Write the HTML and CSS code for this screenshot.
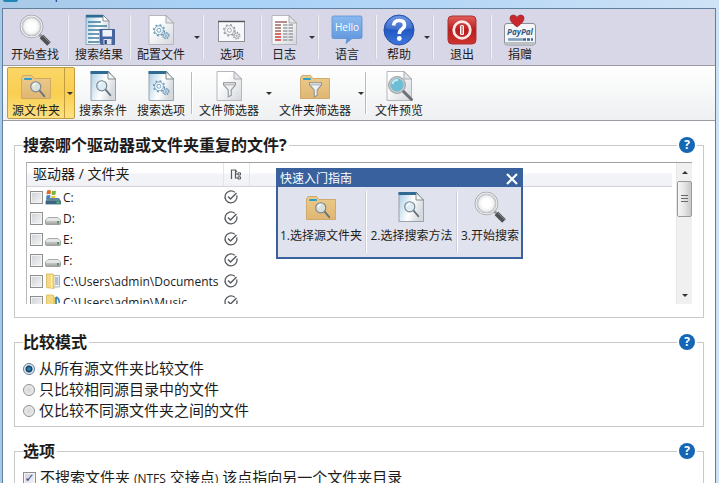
FILE: index.html
```html
<!DOCTYPE html>
<html lang="zh-CN">
<head>
    <meta charset="UTF-8">
    <meta name="viewport" content="width=device-width, initial-scale=1.0">
    <title>AllDup</title>
    <link rel="stylesheet" href="styles.css">
</head>
<body>
    <!-- 图标定义 -->
    <svg class="sprite" aria-hidden="true">
        <defs>
            <linearGradient id="g-page" x1="0" y1="0" x2="1" y2="1">
                <stop offset="0.3" stop-color="#ffffff"/>
                <stop offset="1" stop-color="#d3d7dc"/>
            </linearGradient>
            <linearGradient id="g-page-blue" x1="0" y1="0" x2="1" y2="0.4">
                <stop offset="0" stop-color="#a9cde4"/>
                <stop offset="0.6" stop-color="#ffffff"/>
                <stop offset="1" stop-color="#d5dade"/>
            </linearGradient>
            <linearGradient id="g-folder" x1="0" y1="0" x2="0" y2="1">
                <stop offset="0" stop-color="#eccb8b"/>
                <stop offset="1" stop-color="#dfb672"/>
            </linearGradient>
            <linearGradient id="g-bubble" x1="0" y1="0" x2="0" y2="1">
                <stop offset="0" stop-color="#8ab9ee"/>
                <stop offset="1" stop-color="#5b93dc"/>
            </linearGradient>
            <linearGradient id="g-help" x1="0" y1="0" x2="0" y2="1">
                <stop offset="0" stop-color="#5b8ae0"/>
                <stop offset="0.5" stop-color="#2358c4"/>
                <stop offset="1" stop-color="#3d78dc"/>
            </linearGradient>
            <linearGradient id="g-exit" x1="0" y1="0" x2="0" y2="1">
                <stop offset="0" stop-color="#e0605c"/>
                <stop offset="0.5" stop-color="#b81d1d"/>
                <stop offset="1" stop-color="#cf3430"/>
            </linearGradient>
            <linearGradient id="g-drive" x1="0" y1="0" x2="0" y2="1">
                <stop offset="0" stop-color="#f2f2f2"/>
                <stop offset="1" stop-color="#9da09f"/>
            </linearGradient>
            <radialGradient id="g-lens">
                <stop offset="0.4" stop-color="#ffffff"/>
                <stop offset="1" stop-color="#dfe1e4"/>
            </radialGradient>
        </defs>

        <symbol id="i-page" viewBox="0 0 32 32">
            <path d="M4 1.5H21L28.5 9V30.5H4Z" fill="url(#g-page)" stroke="#b4b7bc"/>
            <path d="M21 1.5V9H28.5Z" fill="#e4e6e9" stroke="#9a9da2" stroke-width="0.8"/>
        </symbol>
        <symbol id="i-page-blue" viewBox="0 0 32 32">
            <path d="M4 1.5H21L28.5 9V30.5H4Z" fill="url(#g-page-blue)" stroke="#8f9ba5" stroke-width="0.9"/>
            <path d="M3.5 1H21.5L24 4H3.5Z" fill="#2e6a92"/>
            <path d="M21 1.5V9H28.5Z" fill="#f3f5f6" stroke="#6d757c" stroke-width="0.8"/>
        </symbol>
        <symbol id="i-lens" viewBox="0 0 20 20">
            <path d="M11.5 11.5L17 18" stroke="#65717b" stroke-width="2" stroke-linecap="round"/>
            <circle cx="7.5" cy="7.5" r="5.6" fill="#d6e9f3" fill-opacity="0.8" stroke="#7b8790" stroke-width="1.3"/>
            <path d="M4.5 7A3.5 3.5 0 0 1 8 4" fill="none" stroke="#fff" stroke-width="1.2"/>
        </symbol>
        <symbol id="i-funnel" viewBox="0 0 20 20">
            <path d="M3 2H17V4.5L12 10.5V17L8.5 18.5V10.500L3 4.500Z" fill="#eff1f2" stroke="#8a8f93" stroke-width="1.2"/>
            <path d="M4 4.500H16" stroke="#9da1a5"/>
        </symbol>
        <symbol id="i-gears" viewBox="0 0 22 20">
            <g fill="none" stroke="currentColor">
                <circle cx="8.5" cy="8.5" r="6.6" stroke-width="1.8" stroke-dasharray="2.3 2.88"/>
                <circle cx="8.5" cy="8.5" r="5.4"/>
                <circle cx="8.5" cy="8.5" r="2.4"/>
                <circle cx="17" cy="15" r="3.9" stroke-width="1.4" stroke-dasharray="1.5 1.56"/>
                <circle cx="17" cy="15" r="3"/>
                <circle cx="17" cy="15" r="1"/>
            </g>
        </symbol>
        <symbol id="i-folder" viewBox="0 0 32 32">
            <path d="M1.5 8L3 5.5H11.5L14 8.5H30.5V28.5H1.5Z" fill="url(#g-folder)" stroke="#cba566" stroke-width="0.9"/>
            <rect x="4" y="8" width="8" height="2" rx="0.8" fill="#2f9fc4"/>
        </symbol>

        <symbol id="i-find" viewBox="0 0 32 32">
            <path d="M20 20L23.5 23.5" stroke="#999" stroke-width="3"/>
            <path d="M22.5 22.5L30 30" stroke="#505154" stroke-width="5.2"/>
            <path d="M24 22L31 29" stroke="#85868a" stroke-width="1"/>
            <circle cx="12.5" cy="12.5" r="10.6" fill="url(#g-lens)" stroke="#a3a4a8" stroke-width="2.4"/>
            <circle cx="12.5" cy="12.5" r="10.4" fill="none" stroke="#ededf0" stroke-width="1.2"/>
            <circle cx="12.5" cy="12.5" r="8.8" fill="none" stroke="#bbbdc1" stroke-width="0.8"/>
        </symbol>
        <symbol id="i-results" viewBox="0 0 32 32">
            <path d="M3 1H20L26 7V30.5H3Z" fill="url(#g-page-blue)" stroke="#7c97a8" stroke-width="0.8"/>
            <path d="M3 1H20L22 3.5H3Z" fill="#2e6a92"/>
            <path d="M20 1V7H26Z" fill="#fff" stroke="#6d757c" stroke-width="0.8"/>
            <path d="M5 8H18M5 12H24M5 16H22M5 20H16M5 24H16M5 28H16" stroke="#3f7d9f" stroke-width="1.3"/>
            <path d="M17 15.5H31.5V30.5H18.5L17 29Z" fill="#4667a3" stroke="#34508a" stroke-width="0.8"/>
            <rect x="19.5" y="16" width="9.5" height="6.5" fill="#eef3f9"/>
            <rect x="20.5" y="25" width="8" height="5.5" fill="#dde3ec"/>
            <rect x="21.5" y="26" width="2.3" height="4" fill="#2d4679"/>
        </symbol>
        <symbol id="i-profile" viewBox="0 0 32 32">
            <use href="#i-page" width="32" height="32"/>
            <use href="#i-gears" x="7" y="9" width="18" height="17" color="#6798b8"/>
        </symbol>
        <symbol id="i-options" viewBox="0 0 32 32">
            <rect x="2.5" y="7.5" width="26" height="20" fill="#f8f8fa" stroke="#8d9095"/>
            <path d="M2 7.5H29" stroke="#505358" stroke-width="1.4"/>
            <use href="#i-gears" x="6" y="9" width="19" height="17" color="#9a9da2"/>
        </symbol>
        <symbol id="i-log" viewBox="0 0 32 32">
            <use href="#i-page" width="32" height="32"/>
            <path d="M7 8H19M7 11H13M7 14H13M7 17H13" stroke="#9d6a66" stroke-width="1.4"/>
            <path d="M7 20H13M7 23H13M7 26H13" stroke="#d23a31" stroke-width="1.6"/>
            <path d="M15 11H25M15 14H25M15 17H25M15 20H25M15 23H25M15 26H25" stroke="#9b9da1" stroke-width="1.3" stroke-dasharray="4.5 1"/>
        </symbol>
        <symbol id="i-help" viewBox="0 0 32 32">
            <circle cx="16" cy="16" r="15" fill="url(#g-help)" stroke="#284fa5"/>
            <path d="M3 14A13 12 0 0 1 29 14Q16 18 3 14Z" fill="#fff" fill-opacity="0.12"/>
            <path d="M10.5 11.5Q11 6.5 16.2 6.5Q21.5 6.5 21.5 11Q21.5 13.5 18.8 15.3Q16.3 17 16.3 20" fill="none" stroke="#fff" stroke-width="3.6"/>
            <circle cx="16.3" cy="24.5" r="2.4" fill="#fff"/>
        </symbol>
        <symbol id="i-exit" viewBox="0 0 32 32">
            <rect x="2" y="2" width="28" height="28" rx="4" fill="url(#g-exit)" stroke="#a33"/>
            <circle cx="16" cy="16" r="8.3" fill="none" stroke="#f7e9e7" stroke-width="2.8"/>
            <rect x="14" y="11" width="4" height="10" rx="1.5" fill="#fff"/>
            <path d="M16 12V20" stroke="#b81d1d"/>
        </symbol>
        <symbol id="i-source" viewBox="0 0 32 32">
            <use href="#i-folder" width="32" height="32"/>
            <use href="#i-lens" x="9" y="10" width="18" height="18"/>
        </symbol>
        <symbol id="i-criteria" viewBox="0 0 32 32">
            <use href="#i-page-blue" width="32" height="32"/>
            <use href="#i-lens" x="8" y="9" width="18" height="18"/>
        </symbol>
        <symbol id="i-search-options" viewBox="0 0 32 32">
            <use href="#i-page-blue" width="32" height="32"/>
            <use href="#i-gears" x="7" y="9" width="18" height="17" color="#6798b8"/>
        </symbol>
        <symbol id="i-file-filter" viewBox="0 0 32 32">
            <use href="#i-page" width="32" height="32"/>
            <use href="#i-funnel" x="8" y="11" width="17" height="17"/>
        </symbol>
        <symbol id="i-folder-filter" viewBox="0 0 32 32">
            <use href="#i-folder" width="32" height="32"/>
            <use href="#i-funnel" x="8" y="11" width="17" height="17"/>
        </symbol>
        <symbol id="i-preview" viewBox="0 0 32 32">
            <use href="#i-page" width="32" height="32"/>
            <path d="M20 21L28.5 29.5" stroke="#6c7074" stroke-width="3" stroke-linecap="round"/>
            <circle cx="14" cy="15" r="7.5" fill="#6dbdd5" stroke="#c3c8cb" stroke-width="2"/>
            <circle cx="14" cy="15" r="8.5" fill="none" stroke="#71777b" stroke-width="0.6"/>
            <path d="M9.5 14A5 5 0 0 1 15 10" fill="none" stroke="#c9edf7" stroke-width="2"/>
        </symbol>

        <symbol id="i-system" viewBox="0 0 16 16">
            <path d="M2 1.5Q4 0.5 6 1.5L5.5 5.5Q3.5 4.5 1.5 5.5Z" fill="#dc6a2c"/>
            <path d="M7 1.5Q9 2.5 11 1.5L10.5 5.5Q8.5 6.5 6.5 5.5Z" fill="#7db538"/>
            <path d="M1.5 6.5Q3.5 5.5 5.5 6.5L5 10.5H1Z" fill="#3e84c4"/>
            <path d="M6.5 6.5Q8.5 7.5 10.5 6.5L10 10.5H6Z" fill="#efc12e"/>
            <path d="M3 9H14L16 12V15.5H0.5V12Z" fill="#62879d"/>
            <path d="M1 12H15.5V15H1Z" fill="#3b6581"/>
            <rect x="11.5" y="12.5" width="3" height="2" fill="#53c65c"/>
        </symbol>
        <symbol id="i-drive" viewBox="0 0 16 16">
            <path d="M3 7.5H13L15.5 10V13.5Q15.5 14.500 14.5 14.500H1.5Q0.5 14.500 0.5 13.5V10Z" fill="url(#g-drive)" stroke="#85898a" stroke-width="0.7"/>
            <path d="M1 10H15" stroke="#fff" stroke-width="0.8"/>
            <rect x="12" y="11" width="2" height="2.3" fill="#4b9c4f"/>
        </symbol>
        <symbol id="i-documents" viewBox="0 0 16 16">
            <path d="M7 2.5H14.5V14H7Z" fill="#f1f5f9" stroke="#8fa3b5" stroke-width="0.8"/>
            <path d="M10 5H13.5M10 7H13.5M10 9H13.5M10 11H13.5" stroke="#5e88b3" stroke-width="0.9"/>
            <path d="M1.5 1H8L9 2V15.5L1.5 14.5Z" fill="#f3da82" stroke="#d3b04c" stroke-width="0.7"/>
            <path d="M6.5 2V15" stroke="#fff0ba"/>
        </symbol>
        <symbol id="i-music" viewBox="0 0 16 16">
            <path d="M1.5 1H8L9 2V15.5L1.5 14.5Z" fill="#f3da82" stroke="#d3b04c" stroke-width="0.7"/>
            <path d="M9 3H12V14H9Z" fill="#e6c867"/>
            <path d="M11 3V12M11 3Q15 5 14 9" fill="none" stroke="#2d84bf" stroke-width="1.5"/>
            <circle cx="9.5" cy="12.5" r="2" fill="#2d84bf"/>
        </symbol>
        <symbol id="i-ok" viewBox="0 0 16 16">
            <path d="M13.8 6.3A6 6 0 1 1 11.8 3.2" fill="none" stroke="#5a5d60" stroke-width="1.3"/>
            <path d="M5 7.5L7.5 10L13.5 4" fill="none" stroke="#5a5d60" stroke-width="1.5"/>
        </symbol>
        <symbol id="i-tree" viewBox="0 0 12 12">
            <path d="M1.5 11V2H5.5V10H8M5.5 6H8M5.5 2L7 4" fill="none" stroke="#55585c" stroke-width="1.2"/>
            <path d="M8 4.8H10.5V7H8ZM8 8.8H10.5V11H8Z" fill="none" stroke="#55585c"/>
        </symbol>
    </svg>

    <div class="window">
        <div class="titlebar">
            <span class="app-icon"></span>
            <span class="app-title">AllDup</span>
        </div>

        <div class="client">
            <!-- 主工具栏 -->
            <nav class="toolbar toolbar-main" aria-label="主工具栏">
                <button type="button" class="tool w64"><svg class="icon"><use href="#i-find"/></svg>开始查找</button>
                <span class="sep"></span>
                <button type="button" class="tool w60"><svg class="icon"><use href="#i-results"/></svg>搜索结果</button>
                <span class="sep"></span>
                <button type="button" class="tool w60"><svg class="icon"><use href="#i-profile"/></svg>配置文件</button>
                <button type="button" class="arrow" aria-label="配置文件菜单"></button>
                <span class="sep"></span>
                <button type="button" class="tool w56"><svg class="icon"><use href="#i-options"/></svg>选项</button>
                <span class="sep"></span>
                <button type="button" class="tool w44"><svg class="icon"><use href="#i-log"/></svg>日志</button>
                <button type="button" class="arrow" aria-label="日志菜单"></button>
                <span class="sep"></span>
                <button type="button" class="tool w56">
                    <svg class="icon" viewBox="0 0 32 32">
                        <path d="M2.5 2H29.5Q31 2 31 3.5V23Q31 24.5 29.5 24.5H21L15 29.5L16 24.5H2.5Q1 24.5 1 23V3.5Q1 2 2.5 2Z" fill="url(#g-bubble)" stroke="#5c8fd3" stroke-width="0.8"/>
                        <text x="16" y="17" class="bubble-text">Hello</text>
                    </svg>语言
                </button>
                <span class="sep"></span>
                <button type="button" class="tool w44"><svg class="icon"><use href="#i-help"/></svg>帮助</button>
                <button type="button" class="arrow" aria-label="帮助菜单"></button>
                <span class="sep"></span>
                <button type="button" class="tool w56"><svg class="icon"><use href="#i-exit"/></svg>退出</button>
                <span class="sep"></span>
                <button type="button" class="tool w56">
                    <svg class="icon" viewBox="0 0 32 32">
                        <rect x="0.5" y="9.5" width="31" height="21.5" rx="2.5" fill="#f4f5f6" stroke="#8b8f94"/>
                        <path d="M1 28H31V29Q31 31 29 31H3Q1 31 1 29Z" fill="#bcc0c5"/>
                        <path d="M4 25.5H18" stroke="#7da0bb" stroke-width="2.6"/>
                        <path d="M18.5 25.5H22M23 25.5H26M27 25.5H29" stroke="#3d6a8f" stroke-width="2.6"/>
                        <text x="16" y="21" class="paypal-text">PayPal</text>
                        <path d="M13 13Q6 8 6 4.5Q6 1 9.300 1Q12 1 13 3.500Q14 1 16.700 1Q20 1 20 4.500Q20 8 13 13Z" fill="#c9282d" stroke="#8e2226" stroke-width="0.7"/>
                    </svg>捐赠
                </button>
            </nav>

            <!-- 页面工具栏 -->
            <nav class="toolbar toolbar-pages" aria-label="页面工具栏">
                <div class="split-active">
                    <button type="button" class="tool w56"><svg class="icon"><use href="#i-source"/></svg>源文件夹</button>
                    <button type="button" class="arrow" aria-label="源文件夹菜单"></button>
                </div>
                <button type="button" class="tool w56"><svg class="icon"><use href="#i-criteria"/></svg>搜索条件</button>
                <button type="button" class="tool w60"><svg class="icon"><use href="#i-search-options"/></svg>搜索选项</button>
                <span class="sep"></span>
                <button type="button" class="tool w72"><svg class="icon"><use href="#i-file-filter"/></svg>文件筛选器</button>
                <button type="button" class="arrow" aria-label="文件筛选器菜单"></button>
                <button type="button" class="tool w84"><svg class="icon"><use href="#i-folder-filter"/></svg>文件夹筛选器</button>
                <button type="button" class="arrow" aria-label="文件夹筛选器菜单"></button>
                <span class="sep"></span>
                <button type="button" class="tool w64"><svg class="icon"><use href="#i-preview"/></svg>文件预览</button>
            </nav>

            <main class="content">
                <fieldset class="group group-source">
                    <legend>搜索哪个驱动器或文件夹重复的文件?</legend>
                    <button type="button" class="help" aria-label="帮助">?</button>
                    <div class="list">
                        <div class="list-view">
                            <table class="folders">
                                <thead>
                                    <tr>
                                        <th class="col-name">驱动器 / 文件夹</th>
                                        <th class="col-sub"><svg class="icon-12"><use href="#i-tree"/></svg></th>
                                        <th></th>
                                    </tr>
                                </thead>
                                <tbody>
                                    <tr>
                                        <td><label class="path"><input type="checkbox" class="check"><svg class="icon-16"><use href="#i-system"/></svg>C:</label></td>
                                        <td class="col-sub"><svg class="icon-16"><use href="#i-ok"/></svg></td>
                                        <td></td>
                                    </tr>
                                    <tr>
                                        <td><label class="path"><input type="checkbox" class="check"><svg class="icon-16"><use href="#i-drive"/></svg>D:</label></td>
                                        <td class="col-sub"><svg class="icon-16"><use href="#i-ok"/></svg></td>
                                        <td></td>
                                    </tr>
                                    <tr>
                                        <td><label class="path"><input type="checkbox" class="check"><svg class="icon-16"><use href="#i-drive"/></svg>E:</label></td>
                                        <td class="col-sub"><svg class="icon-16"><use href="#i-ok"/></svg></td>
                                        <td></td>
                                    </tr>
                                    <tr>
                                        <td><label class="path"><input type="checkbox" class="check"><svg class="icon-16"><use href="#i-drive"/></svg>F:</label></td>
                                        <td class="col-sub"><svg class="icon-16"><use href="#i-ok"/></svg></td>
                                        <td></td>
                                    </tr>
                                    <tr>
                                        <td><label class="path"><input type="checkbox" class="check"><svg class="icon-16"><use href="#i-documents"/></svg>C:\Users\admin\Documents</label></td>
                                        <td class="col-sub"><svg class="icon-16"><use href="#i-ok"/></svg></td>
                                        <td></td>
                                    </tr>
                                    <tr>
                                        <td><label class="path"><input type="checkbox" class="check"><svg class="icon-16"><use href="#i-music"/></svg>C:\Users\admin\Music</label></td>
                                        <td class="col-sub"><svg class="icon-16"><use href="#i-ok"/></svg></td>
                                        <td></td>
                                    </tr>
                                </tbody>
                            </table>
                        </div>
                        <div class="scrollbar">
                            <button type="button" class="scroll-btn scroll-up" aria-label="向上"></button>
                            <div class="thumb"><span class="grip"></span></div>
                            <button type="button" class="scroll-btn scroll-down" aria-label="向下"></button>
                        </div>
                    </div>

                    <!-- 浮动的快速入门窗口 -->
                    <section class="guide">
                        <header class="guide-title">
                            <h2>快速入门指南</h2>
                            <button type="button" class="guide-close" aria-label="关闭">
                                <svg viewBox="0 0 12 12"><path d="M1 1L11 11M11 1L1 11" stroke="#fff" stroke-width="2.2"/></svg>
                            </button>
                        </header>
                        <div class="guide-steps">
                            <button type="button" class="tool"><svg class="icon"><use href="#i-source"/></svg>1.选择源文件夹</button>
                            <span class="sep"></span>
                            <button type="button" class="tool"><svg class="icon"><use href="#i-criteria"/></svg>2.选择搜索方法</button>
                            <span class="sep"></span>
                            <button type="button" class="tool"><svg class="icon"><use href="#i-find"/></svg>3.开始搜索</button>
                        </div>
                    </section>
                </fieldset>

                <fieldset class="group">
                    <legend>比较模式</legend>
                    <button type="button" class="help" aria-label="帮助">?</button>
                    <label class="option"><input type="radio" name="mode" class="radio" checked>从所有源文件夹比较文件</label>
                    <label class="option"><input type="radio" name="mode" class="radio">只比较相同源目录中的文件</label>
                    <label class="option"><input type="radio" name="mode" class="radio">仅比较不同源文件夹之间的文件</label>
                </fieldset>

                <fieldset class="group">
                    <legend>选项</legend>
                    <button type="button" class="help" aria-label="帮助">?</button>
                    <label class="option"><input type="checkbox" class="check" checked><span>不搜索文件夹 <small>(NTFS</small> 交接点<small>)</small> 该点指向另一个文件夹目录</span></label>
                </fieldset>
            </main>
        </div>
    </div>
</body>
</html>
```

FILE: styles.css
```css
:root {
    --frame: #5f7f9f;
    --toolbar: #d8d7e7;
    --line: #c9c9c9;
    --guide: #38619e;
    --help: #1566b4;
}

* {
    margin: 0;
    padding: 0;
    box-sizing: border-box;
}

body {
    font-family: 'Open Sans', 'Noto Sans CJK SC', sans-serif;
    font-size: 12px;
    color: #1c1c1c;
    background-color: #b9d6f3;
    overflow: hidden;
}

button {
    font: inherit;
    color: inherit;
    background: none;
    border: none;
}

.sprite {
    position: absolute;
    width: 0;
    height: 0;
}

/* 窗口 */
.window {
    display: flex;
    flex-direction: column;
    height: 100vh;
    padding: 0 3px 0 2px;
    background: linear-gradient(to right, #a9c9e6, #a8d2f8 30%, #b4d6f6 60%, #cfe3f6);
}

.titlebar {
    display: flex;
    align-items: flex-end;
    gap: 7px;
    height: 8px;
    padding: 0 1px 6px;
    overflow: hidden;
    flex-shrink: 0;
}

.app-icon {
    width: 15px;
    height: 16px;
    border-radius: 2px;
    background-color: #1f87b5;
    flex-shrink: 0;
}

.app-title {
    font-size: 12px;
    line-height: 14px;
}

.client {
    flex: 1;
    min-height: 0;
    display: flex;
    flex-direction: column;
    background-color: #fff;
    border: 1px solid var(--frame);
    border-bottom: none;
    overflow: hidden;
}

/* 工具栏 */
.toolbar {
    display: flex;
    flex-shrink: 0;
    border-bottom: 1px solid #9a9ba3;
}

.toolbar-main {
    height: 57px;
    background-color: var(--toolbar);
}

.toolbar-pages {
    height: 55px;
    padding-left: 4px;
    background: linear-gradient(to bottom, #fff, #eef0f1);
}

.tool {
    display: flex;
    flex-direction: column;
    align-items: center;
    gap: 1px;
    padding-top: 5px;
    line-height: 16px;
    white-space: nowrap;
    flex-shrink: 0;
}

.icon {
    width: 32px;
    height: 32px;
    flex-shrink: 0;
}

.icon-16 {
    width: 16px;
    height: 16px;
    flex-shrink: 0;
}

.icon-12 {
    width: 12px;
    height: 12px;
}

.w44 { width: 44px; }
.w56 { width: 56px; }
.w60 { width: 60px; }
.w64 { width: 64px; }
.w72 { width: 72px; }
.w84 { width: 84px; }

.arrow {
    width: 11px;
    display: flex;
    align-items: center;
    justify-content: center;
    flex-shrink: 0;
}

.arrow::before,
.scroll-btn::before {
    content: '';
    border: 3px solid transparent;
    border-top-color: #333;
    border-bottom-width: 0;
}

.sep {
    width: 2px;
    margin: 6px 0;
    background-color: #f1f1f7;
    border-left: 1px solid #cfcfdb;
    flex-shrink: 0;
}

.toolbar-pages .tool {
    padding-top: 4px;
}

.toolbar-pages .arrow {
    width: 8px;
}

.toolbar-pages .sep {
    background-color: #fff;
    border-left-color: #b9bbbe;
}

.split-active {
    display: flex;
    margin: 1px 0;
    border: 1px solid #c29b3f;
    border-radius: 2px;
    background: linear-gradient(to bottom, #fbd667, #f9cf51 50%, #fce182);
}

.split-active .tool {
    padding-top: 2px;
}

.toolbar-pages .split-active .arrow {
    width: 10px;
    border-left: 1px solid #c29b3f;
}

.bubble-text {
    font-family: 'Open Sans', sans-serif;
    font-size: 10px;
    fill: #fff;
    text-anchor: middle;
}

.paypal-text {
    font-family: 'Open Sans', sans-serif;
    font-size: 8px;
    font-weight: 700;
    font-style: italic;
    fill: #2e5c86;
    text-anchor: middle;
}

/* 内容分组 */
.content {
    display: flex;
    flex-direction: column;
    gap: 14px;
    padding: 14px 11px 0;
}

.group {
    position: relative;
    min-width: 0;
    padding: 6px 8px 5px;
    border: 1px solid var(--line);
}

.group-source {
    padding: 7px 11px 13px;
}

legend {
    padding: 0 2px 0 0;
    font-size: 16px;
    font-weight: 700;
    line-height: 20px;
}

.group-source legend {
    margin-left: -3px;
}

.help {
    position: absolute;
    top: -18px;
    right: 8px;
    width: 16px;
    height: 16px;
    border-radius: 50%;
    background-color: var(--help);
    box-shadow: 0 0 0 2px #fff;
    color: #fff;
    font-weight: 700;
    line-height: 16px;
    text-align: center;
}

/* 文件夹列表 */
.list {
    display: flex;
    height: 142px;
    border-top: 1px solid #a0a0a0;
    border-left: 1px solid #b8b8b8;
}

.list-view {
    flex: 1;
    min-width: 0;
    padding-right: 4px;
    overflow: hidden;
}

.folders {
    width: 100%;
    table-layout: fixed;
    border-collapse: collapse;
}

.folders th {
    height: 23px;
    font-size: 14px;
    font-weight: 400;
    line-height: 20px;
    text-align: left;
    background: linear-gradient(to bottom, #fff 40%, #f2f4f7 50%, #f0f2f5);
    border-right: 1px solid #e3e5e8;
    border-bottom: 1px solid #d2d4d7;
}

.folders th:last-child {
    border-right: none;
}

.folders .col-name {
    width: 196px;
    padding-left: 6px;
}

.folders .col-sub {
    width: 26px;
}

.folders td {
    height: 21px;
}

.folders svg {
    display: block;
}

.folders th svg {
    margin: 0 auto;
}

.path {
    display: flex;
    align-items: center;
    gap: 2px;
    padding-left: 3px;
    line-height: 21px;
    white-space: nowrap;
}

.check {
    appearance: none;
    width: 13px;
    height: 13px;
    border: 1px solid #8e8f8f;
    background: linear-gradient(135deg, #cdd1d6, #f6f6f6);
    box-shadow: inset 0 0 0 1px #f4f4f4;
    flex-shrink: 0;
}

.check:checked {
    display: flex;
    align-items: center;
    justify-content: center;
}

.check:checked::before {
    content: '✓';
    font: 700 12px/11px 'DejaVu Sans', sans-serif;
    color: #33499c;
}

/* 滚动条 */
.scrollbar {
    display: flex;
    flex-direction: column;
    width: 16px;
    background-color: #f0f0f0;
    border-left: 1px solid #e6e6e6;
}

.scroll-btn {
    display: flex;
    align-items: center;
    justify-content: center;
    height: 18px;
}

.scroll-up::before {
    border-width: 0 3px 3px;
    border-bottom-color: #333;
}

.scroll-down {
    margin-top: auto;
}

.thumb {
    display: flex;
    align-items: center;
    justify-content: center;
    height: 36px;
    border: 1px solid #999;
    border-radius: 2px;
    background: linear-gradient(to right, #f6f6f6, #e4e4e6 50%, #c6c7ca);
}

.grip {
    width: 7px;
    height: 8px;
    background: repeating-linear-gradient(to bottom, #6a6a6a 0 1px, transparent 1px 3px);
}

/* 快速入门 */
.guide {
    position: absolute;
    top: 13px;
    left: 261px;
    width: 247px;
    border: 2px solid var(--guide);
    background-color: #e0e3ed;
}

.guide-title {
    display: flex;
    align-items: center;
    justify-content: space-between;
    height: 17px;
    padding: 0 3px 0 2px;
    background-color: var(--guide);
    color: #fff;
}

.guide-title h2 {
    font-size: 12px;
    font-weight: 400;
    line-height: 16px;
}

.guide-close {
    width: 12px;
    height: 12px;
}

.guide-close svg {
    display: block;
}

.guide-steps {
    display: flex;
    justify-content: space-between;
    height: 70px;
    padding: 0 2px;
}

.guide-steps .tool {
    gap: 5px;
    padding-top: 4px;
}

.guide-steps .sep {
    margin: 4px 0;
    background-color: #fff;
}

/* 选项 */
.option {
    display: flex;
    align-items: center;
    gap: 4px;
    font-size: 15px;
    line-height: 21px;
    white-space: nowrap;
}

.option small {
    font-size: 12px;
}

.radio {
    appearance: none;
    width: 12px;
    height: 12px;
    border: 1px solid #8e8f8f;
    border-radius: 50%;
    background: radial-gradient(circle, #d4d6d8, #f3f3f3);
    flex-shrink: 0;
}

.radio:checked {
    border-color: #5d7f9c;
    background: radial-gradient(circle, #2a86b4 0 1px, #173a5c 3px, #dfe9f1 4px);
}
```
